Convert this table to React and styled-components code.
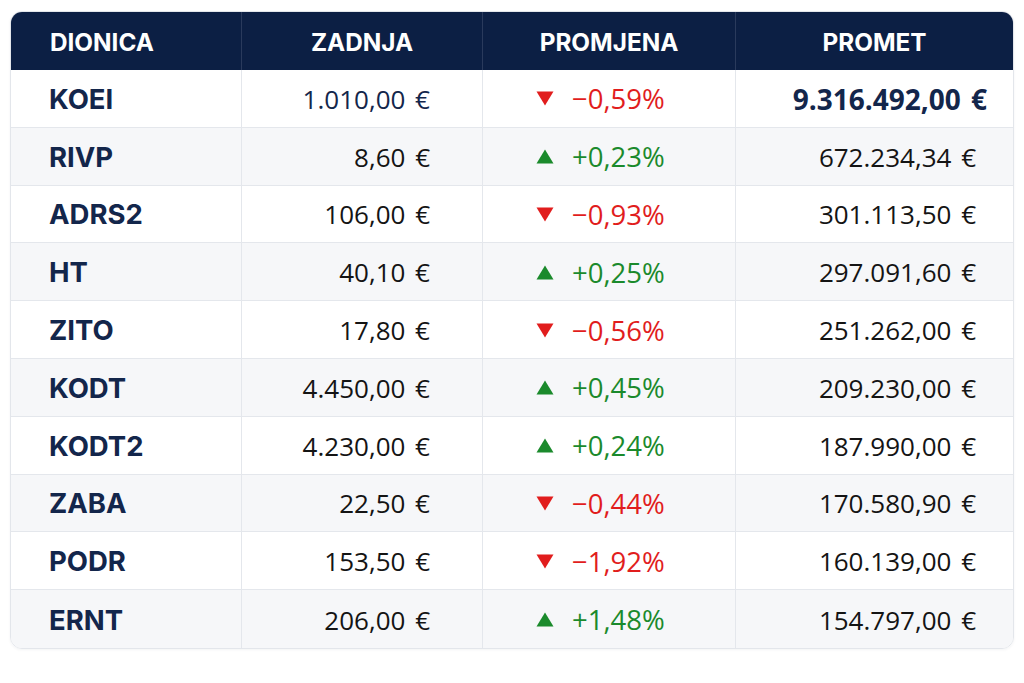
import React from "react";
import styled, { createGlobalStyle } from "styled-components";

const Global = createGlobalStyle`
  html, body { margin: 0; padding: 0; background: #ffffff; }
  body { font-family: "Open Sans", "Noto Sans", sans-serif; }
`;

const Page = styled.div`
  width: 1024px;
  height: 683px;
  box-sizing: border-box;
  padding: 11px 10px 0 10px;
  background: #ffffff;
`;

const Table = styled.div`
  display: grid;
  grid-template-columns: 231px 241px 253px 1fr;
  border: 1px solid #e3e6eb;
  border-radius: 12px;
  overflow: hidden;
  box-shadow: 0 1px 3px rgba(15, 30, 60, 0.05);
`;

const HeadCell = styled.div`
  height: 59px;
  box-sizing: border-box;
  background: #0c1f44;
  color: #ffffff;
  font-family: "Inter", "Liberation Sans", sans-serif;
  font-weight: 700;
  font-size: 24.3px;
  display: flex;
  align-items: center;
  justify-content: ${(p) => (p.$align === "left" ? "flex-start" : "center")};
  padding-left: ${(p) => (p.$align === "left" ? "39px" : "0")};
  padding-top: 2px;
  border-right: ${(p) => (p.$last ? "none" : "1px solid #2a3a5c")};
  margin-top: -1px;
`;

const Cell = styled.div`
  height: 57.8px;
  box-sizing: border-box;
  background: ${(p) => (p.$alt ? "#f6f7f9" : "#ffffff")};
  border-bottom: ${(p) => (p.$lastRow ? "none" : "1px solid #e4e7ec")};
  border-right: ${(p) => (p.$last ? "none" : "1px solid #e4e7ec")};
  display: flex;
  align-items: center;
  padding-top: 1px;
`;

const Ticker = styled(Cell)`
  padding-left: 38px;
  font-family: "Inter", "Liberation Sans", sans-serif;
  font-weight: 700;
  font-size: 27.5px;
  color: #13264b;
`;

const Money = styled(Cell)`
  justify-content: flex-end;
  padding-right: ${(p) => p.$pr}px;
  font-family: "Open Sans", "Noto Sans", sans-serif;
  font-size: ${(p) => (p.$strong ? "28px" : "26px")};
  word-spacing: 3px;
  font-weight: ${(p) => (p.$strong ? 700 : 400)};
  color: ${(p) => (p.$navy ? "#13264b" : "#141414")};
`;

const Change = styled(Cell)`
  padding-left: 53px;
  gap: 18px;
  font-family: "Open Sans", "Noto Sans", sans-serif;
  font-size: 27.5px;
  color: ${(p) => (p.$up ? "#1b8a2c" : "#e11d1d")};
`;

const ArrowIcon = styled.svg`
  flex: none;
  display: block;
  width: 18px;
  height: 15px;
`;

const Arrow = ({ up }) => (
  <ArrowIcon viewBox="0 0 18 15" aria-hidden="true">
    {up ? (
      <path d="M9 0.5 L17.5 14.5 L0.5 14.5 Z" fill="#1b8a2c" />
    ) : (
      <path d="M0.5 0.5 L17.5 0.5 L9 14.5 Z" fill="#e11d1d" />
    )}
  </ArrowIcon>
);

const rows = [
  ["KOEI", "1.010,00 €", false, "−0,59%", "9.316.492,00 €"],
  ["RIVP", "8,60 €", true, "+0,23%", "672.234,34 €"],
  ["ADRS2", "106,00 €", false, "−0,93%", "301.113,50 €"],
  ["HT", "40,10 €", true, "+0,25%", "297.091,60 €"],
  ["ZITO", "17,80 €", false, "−0,56%", "251.262,00 €"],
  ["KODT", "4.450,00 €", true, "+0,45%", "209.230,00 €"],
  ["KODT2", "4.230,00 €", true, "+0,24%", "187.990,00 €"],
  ["ZABA", "22,50 €", false, "−0,44%", "170.580,90 €"],
  ["PODR", "153,50 €", false, "−1,92%", "160.139,00 €"],
  ["ERNT", "206,00 €", true, "+1,48%", "154.797,00 €"],
];

export default function App() {
  return (
    <Page>
      <Global />
      <Table>
        <HeadCell $align="left">DIONICA</HeadCell>
        <HeadCell>ZADNJA</HeadCell>
        <HeadCell>PROMJENA</HeadCell>
        <HeadCell $last>PROMET</HeadCell>
        {rows.map(([t, last, up, ch, vol], i) => {
          const alt = i % 2 === 1;
          const lastRow = i === rows.length - 1;
          const first = i === 0;
          return (
            <React.Fragment key={t}>
              <Ticker $alt={alt} $lastRow={lastRow}>{t}</Ticker>
              <Money $alt={alt} $lastRow={lastRow} $pr={52} $navy={first}>
                {last}
              </Money>
              <Change $alt={alt} $lastRow={lastRow} $up={up}>
                <Arrow up={up} />
                <span>{ch}</span>
              </Change>
              <Money
                $alt={alt}
                $lastRow={lastRow}
                $last
                $pr={first ? 26 : 37}
                $navy={first}
                $strong={first}
              >
                {vol}
              </Money>
            </React.Fragment>
          );
        })}
      </Table>
    </Page>
  );
}
